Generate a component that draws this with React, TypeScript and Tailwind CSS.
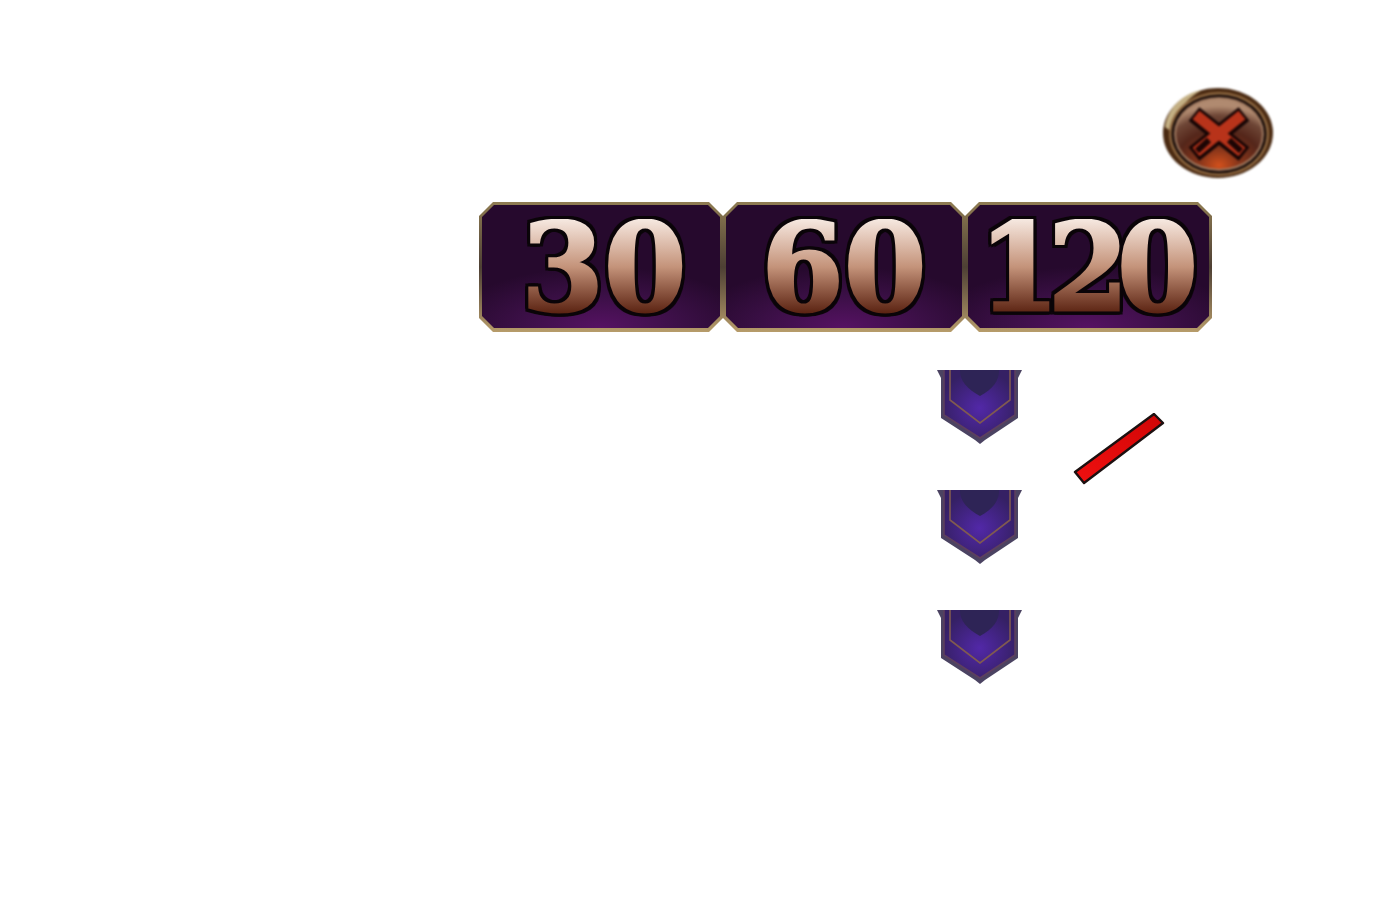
function Num({ children, className = '' }: { children: React.ReactNode; className?: string }) {
  return (
    <span
      className={`bg-linear-to-b from-[#f6e9e1] via-[#c4937a] via-50% to-[#571f0e] bg-clip-text text-transparent font-bold leading-[96px] h-[96px] block text-[122px] [-webkit-text-stroke:3px_transparent] [font-family:'DejaVu_Serif',serif] [filter:drop-shadow(3px_0_0_#0a0408)_drop-shadow(-3px_0_0_#0a0408)_drop-shadow(0_3px_0_#0a0408)_drop-shadow(0_-3px_0_#0a0408)_blur(0.6px)] ${className}`}
    >
      {children}
    </span>
  )
}

function TimeButton({ width, children }: { width: string; children: React.ReactNode }) {
  return (
    <div className={`${width} h-[130px] shrink-0 blur-[0.5px]`}>
      <div className="w-full h-full pt-[3px] pb-[4px] px-[3px] bg-linear-to-b from-[#8f7c52] via-[#4e4034] via-50% to-[#b79c6a] [clip-path:polygon(14px_0,calc(100%-14px)_0,100%_14px,100%_calc(100%-14px),calc(100%-14px)_100%,14px_100%,0_calc(100%-14px),0_14px)]">
        <div className="w-full h-full flex items-center justify-center bg-[radial-gradient(ellipse_65%_50%_at_50%_100%,#561263_0%,#3a0f45_55%,#26092d_100%)] [clip-path:polygon(12px_0,calc(100%-12px)_0,100%_12px,100%_calc(100%-12px),calc(100%-12px)_100%,12px_100%,0_calc(100%-12px),0_12px)]">
          {children}
        </div>
      </div>
    </div>
  )
}

function CloseIcon() {
  return (
    <svg width="112" height="92" viewBox="0 0 112 92" className="blur-[0.8px]">
      <defs>
        <radialGradient id="closeFace" cx="50%" cy="95%" r="85%">
          <stop offset="0%" stopColor="#d2501c" />
          <stop offset="26%" stopColor="#8a361a" />
          <stop offset="60%" stopColor="#54261a" />
          <stop offset="84%" stopColor="#6e4636" />
          <stop offset="100%" stopColor="#b08a70" />
        </radialGradient>
      </defs>
      <ellipse cx="56" cy="46" rx="55" ry="45" fill="#4a2a12" />
      <path d="M3 40C6 20 22 6 40 3C24 12 14 24 11 46Z" fill="#c4b084" />
      <ellipse cx="57" cy="47" rx="50" ry="42" fill="#8f6840" />
      <ellipse cx="57" cy="47" rx="47.5" ry="39.5" fill="#160a08" />
      <ellipse cx="57" cy="47" rx="45" ry="37" fill="#a07a60" />
      <ellipse cx="57" cy="47" rx="43" ry="35" fill="url(#closeFace)" />
      <g fill="none" strokeLinecap="butt">
        <path d="M32 27L82 67M82 27L32 67" stroke="#140404" strokeWidth="17" />
        <path d="M34 28L80 65M80 28L34 65" stroke="#b8331a" strokeWidth="11" />
        <path d="M47 53L35 64M67 53L79 64" stroke="#1c0504" strokeWidth="6" />
      </g>
    </svg>
  )
}

function Shield() {
  return (
    <svg width="85" height="75" viewBox="0 0 85 75" className="blur-[0.7px] block">
      <defs>
        <radialGradient id="shieldFill" cx="50%" cy="56%" r="55%">
          <stop offset="0%" stopColor="#5228a8" />
          <stop offset="100%" stopColor="#352064" />
        </radialGradient>
      </defs>
      <path d="M0 1H85L81 9V49L48 71L43 75L38 71L4 49V9Z" fill="#4b4362" />
      <path d="M7 1H78V46L43 69L7 46Z" fill="url(#shieldFill)" />
      <path d="M23 1H62C62 12 56 20 43 27C30 20 23 12 23 1Z" fill="#2e2456" />
      <path d="M7 1V46L43 69L78 46V1" fill="none" stroke="#5e3f5e" strokeWidth="1.5" />
      <path d="M13 1V31L43 54L73 31V1" fill="none" stroke="#805a50" strokeWidth="1.6" />
    </svg>
  )
}

function RedSlash() {
  return (
    <svg width="92" height="72" viewBox="0 0 92 72" className="block blur-[0.4px]">
      <defs>
        <linearGradient id="slashFill" x1="0" y1="1" x2="1" y2="0">
          <stop offset="0%" stopColor="#f01010" />
          <stop offset="100%" stopColor="#d00606" />
        </linearGradient>
      </defs>
      <path d="M2 59L81 1L90 10L11 70Z" fill="url(#slashFill)" stroke="#1c1010" strokeWidth="2.4" strokeLinejoin="round" />
    </svg>
  )
}

export default function App() {
  return (
    <div className="w-[1400px] h-[900px] bg-white pt-[87px] overflow-hidden">
      <div className="flex justify-end pr-[126px]">
        <CloseIcon />
      </div>

      <div className="flex mt-[23px] ml-[479px]">
        <TimeButton width="w-[244px]">
          <Num className="ml-[6px] scale-x-[0.97]">30</Num>
        </TimeButton>
        <TimeButton width="w-[242px]">
          <Num className="scale-x-[0.97]">60</Num>
        </TimeButton>
        <TimeButton width="w-[247px]">
          <Num className="tracking-[-12px] scale-x-[0.95] pr-[12px]">120</Num>
        </TimeButton>
      </div>

      <div className="flex items-start mt-[37px] ml-[937px]">
        <div className="flex flex-col gap-[45px]">
          <Shield />
          <Shield />
          <Shield />
        </div>
        <div className="ml-[51px] mt-[44px]">
          <RedSlash />
        </div>
      </div>
    </div>
  )
}
